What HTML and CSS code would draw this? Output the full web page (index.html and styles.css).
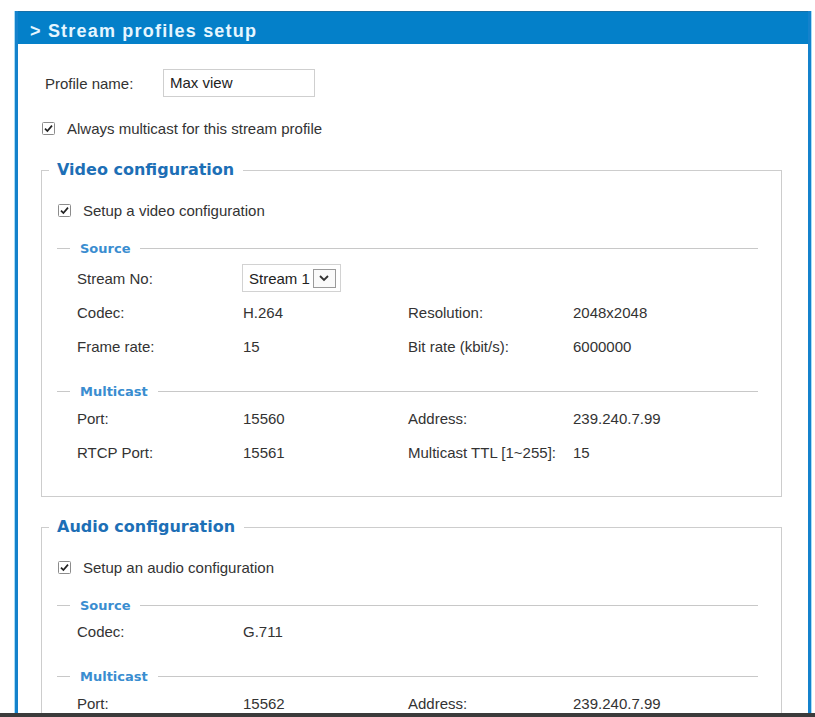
FILE: index.html
```html
<!DOCTYPE html>
<html lang="en">
<head>
<meta charset="utf-8">
<title>Stream profiles setup</title>
<link rel="stylesheet" href="styles.css">
</head>
<body>
<div class="panel">
  <div class="panel-head">&gt; Stream profiles setup</div>
  <div class="panel-body">
    <div class="profile-row">
      <span class="profile-label">Profile name:</span>
      <span class="text-input">Max view</span>
    </div>
    <label class="check-row check-top">
      <svg class="check" width="13" height="13" viewBox="0 0 13 13"><rect x="0.5" y="0.5" width="12" height="12" rx="1" fill="#fff" stroke="#8c8c8c"/><path d="M3 6.6 L5.4 9.1 L10 3.6" fill="none" stroke="#222" stroke-width="1.7"/></svg>
      <span>Always multicast for this stream profile</span>
    </label>

    <fieldset class="group">
      <legend>Video configuration</legend>
      <label class="check-row">
        <svg class="check" width="13" height="13" viewBox="0 0 13 13"><rect x="0.5" y="0.5" width="12" height="12" rx="1" fill="#fff" stroke="#8c8c8c"/><path d="M3 6.6 L5.4 9.1 L10 3.6" fill="none" stroke="#222" stroke-width="1.7"/></svg>
        <span>Setup a video configuration</span>
      </label>

      <div class="sub-title"><span>Source</span></div>
      <div class="grid">
        <span>Stream No:</span>
        <span class="select-cell">
          <span class="select">Stream 1
            <span class="select-btn"><svg width="12" height="8" viewBox="0 0 12 8"><path d="M2 2 L6 6 L10 2" fill="none" stroke="#333" stroke-width="1.8"/></svg></span>
          </span>
        </span>
        <span></span><span></span>
        <span>Codec:</span><span>H.264</span><span>Resolution:</span><span>2048x2048</span>
        <span>Frame rate:</span><span>15</span><span>Bit rate (kbit/s):</span><span>6000000</span>
      </div>

      <div class="sub-title"><span>Multicast</span></div>
      <div class="grid grid-tight">
        <span>Port:</span><span>15560</span><span>Address:</span><span>239.240.7.99</span>
        <span>RTCP Port:</span><span>15561</span><span>Multicast TTL [1~255]:</span><span>15</span>
      </div>
    </fieldset>

    <fieldset class="group group-audio">
      <legend>Audio configuration</legend>
      <label class="check-row">
        <svg class="check" width="13" height="13" viewBox="0 0 13 13"><rect x="0.5" y="0.5" width="12" height="12" rx="1" fill="#fff" stroke="#8c8c8c"/><path d="M3 6.6 L5.4 9.1 L10 3.6" fill="none" stroke="#222" stroke-width="1.7"/></svg>
        <span>Setup an audio configuration</span>
      </label>

      <div class="sub-title"><span>Source</span></div>
      <div class="grid grid-snug">
        <span>Codec:</span><span>G.711</span><span></span><span></span>
      </div>

      <div class="sub-title"><span>Multicast</span></div>
      <div class="grid grid-tight">
        <span>Port:</span><span>15562</span><span>Address:</span><span>239.240.7.99</span>
      </div>
    </fieldset>
  </div>
</div>
<div class="screen-edge"></div>
</body>
</html>
```

FILE: styles.css
```css
html, body {
  margin: 0;
  padding: 0;
  height: 100%;
  overflow: hidden;
  background: #fff;
}

body {
  font-family: "Liberation Sans", Arial, sans-serif;
  font-size: 15px;
  color: #333;
}

/* outer panel with the blue frame */
.panel {
  margin: 11px 4px 0 15px;
  border-left: 3px solid #1482cc;
  border-right: 3px solid #1482cc;
  box-shadow: -1px 0 0 #a8dcf6, 1px 0 0 #a8dcf6;
  min-height: 720px;
}

.panel-head {
  height: 33px;
  box-sizing: border-box;
  padding: 6px 0 0 12px;
  background: #0480c9;
  border-top: 1px solid #1670a8;
  color: #e6f6ff;
  font-weight: bold;
  font-size: 18px;
  letter-spacing: 1.2px;
  line-height: 26px;
}

.panel-body {
  padding: 0 26px 0 27px;
}

.profile-row {
  display: flex;
  align-items: center;
  margin-top: 25px;
  height: 28px;
}

.profile-label {
  width: 118px;
}

.text-input {
  box-sizing: border-box;
  width: 152px;
  height: 28px;
  padding: 0 6px;
  border: 1px solid #cfcfcf;
  line-height: 26px;
  color: #222;
}

.check-row {
  display: flex;
  align-items: center;
  height: 20px;
  gap: 12px;
}

.check-top {
  margin: 21px 0 0 -3px;
}

.check {
  flex: none;
}

/* configuration boxes */
.group {
  margin: 22px 0 0 -4px;
  padding: 0 23px 27px 15px;
  border: 1px solid #cdcdcd;
  min-inline-size: 0;
}

.group-audio {
  margin-top: 20px;
}

.group legend {
  padding: 0 9px 0 8px;
  margin-left: -8px;
  font-family: "DejaVu Sans", Verdana, sans-serif;
  font-weight: bold;
  font-size: 16px;
  line-height: 20px;
  color: #1d6fb6;
}

.group .check-row {
  margin: 20px 0 0 1px;
}

.sub-title {
  display: flex;
  align-items: center;
  height: 16px;
  margin-top: 20px;
  font-family: "DejaVu Sans", Verdana, sans-serif;
  font-weight: bold;
  font-size: 13px;
  color: #3a8dd0;
}

.sub-title::before {
  content: "";
  width: 13px;
  border-top: 1px solid #c8c8c8;
  margin-right: 10px;
}

.sub-title::after {
  content: "";
  flex: 1;
  border-top: 1px solid #c8c8c8;
  margin-left: 10px;
}

.grid {
  display: grid;
  grid-template-columns: 166px 165px 165px 1fr;
  grid-auto-rows: 34px;
  align-items: center;
  padding-left: 20px;
  margin-top: 5px;
}

.grid-tight {
  margin-top: 2px;
}

.grid-snug {
  margin-top: 1px;
}

.select-cell {
  margin-left: -1px;
}

.select {
  display: inline-flex;
  align-items: center;
  box-sizing: border-box;
  height: 28px;
  padding: 0 4px 0 6px;
  border: 1px solid #d2d2d2;
  gap: 3px;
  color: #222;
}

.select-btn {
  display: inline-flex;
  align-items: center;
  justify-content: center;
  box-sizing: border-box;
  width: 23px;
  height: 19px;
  border: 1px solid #9a9a9a;
  background: #fafafa;
}

.screen-edge {
  position: fixed;
  left: 0;
  right: 0;
  bottom: 0;
  height: 4px;
  background: #3b3b3b;
}
```
